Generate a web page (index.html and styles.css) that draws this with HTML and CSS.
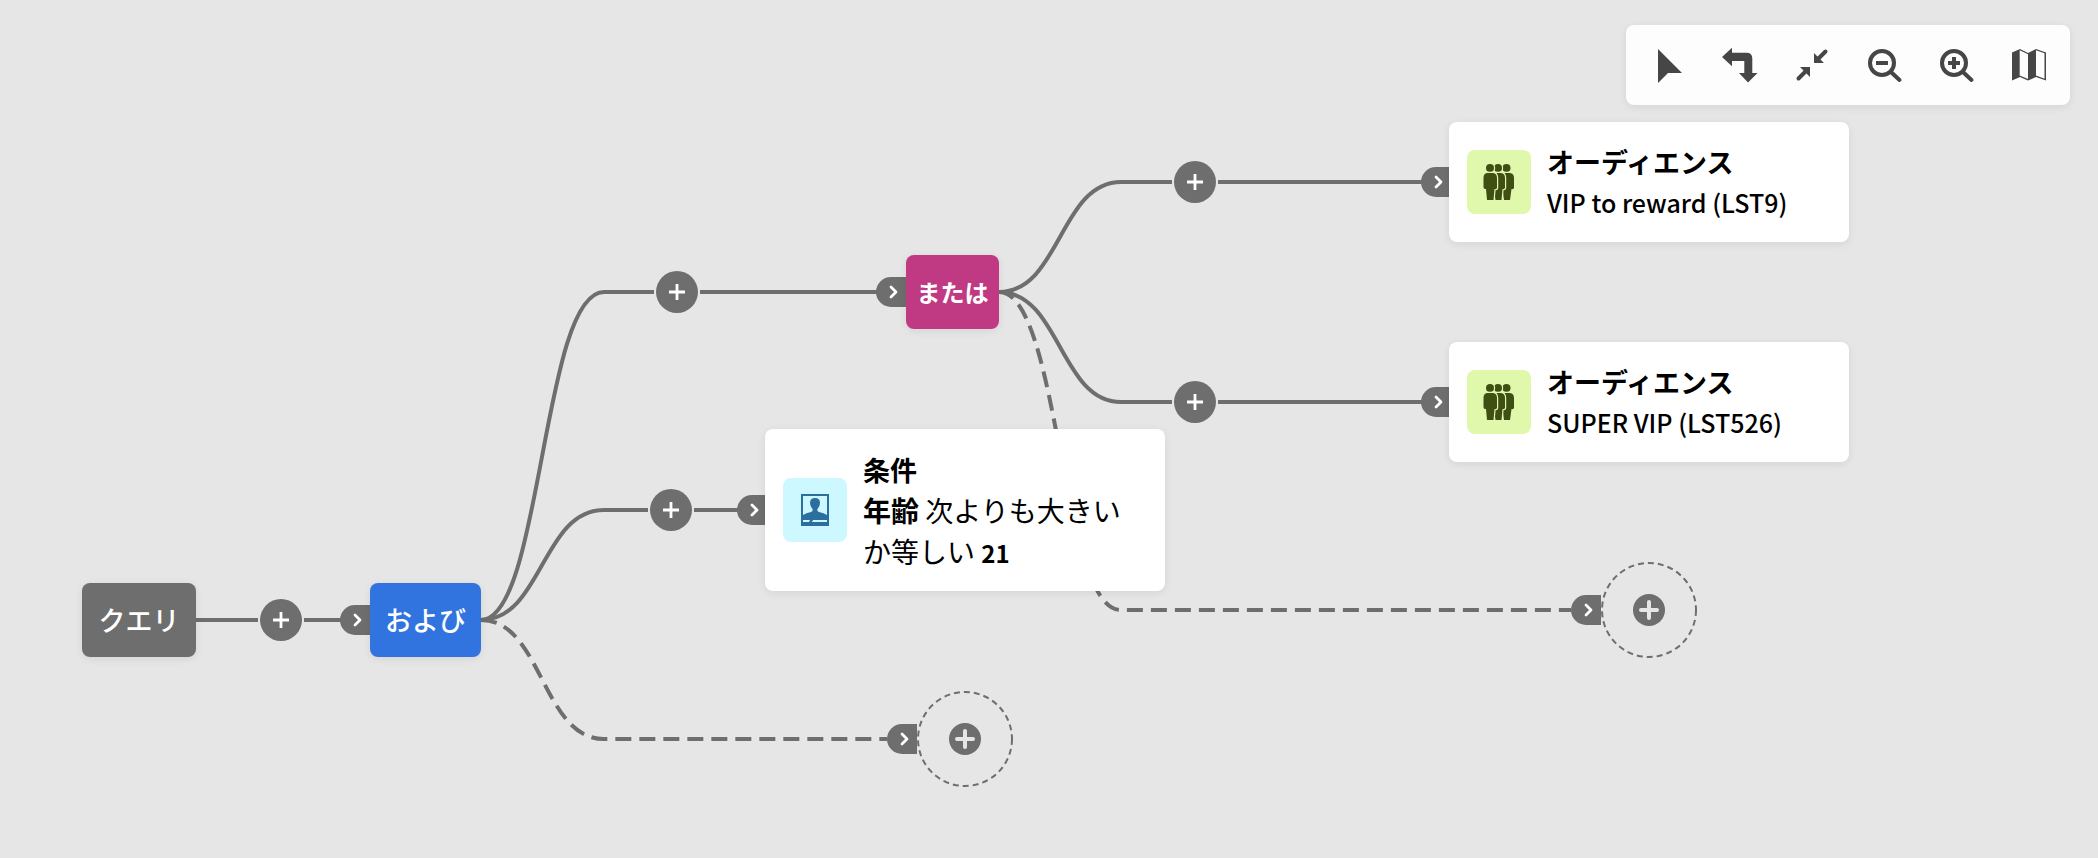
FILE: index.html
```html
<!DOCTYPE html>
<html lang="ja">
<head>
<meta charset="utf-8">
<title>クエリ</title>
<link rel="stylesheet" href="styles.css">
</head>
<body>
<svg class="symbols" aria-hidden="true">
  <symbol id="chevron" viewBox="0 0 12 16"><path d="M3 3 L8 8 L3 13" fill="none" stroke="#fff" stroke-width="2.8" stroke-linecap="round" stroke-linejoin="round"/></symbol>
  <symbol id="plus" viewBox="0 0 16 16"><path d="M8 0V16M0 8H16" stroke="#fff" stroke-width="2.8"/></symbol>
  <symbol id="plus-round" viewBox="0 0 32 32"><circle cx="16" cy="16" r="16" fill="#6e6e6e"/><path d="M16 8V24M8 16H24" stroke="#e6e6e6" stroke-width="4" stroke-linecap="round"/></symbol>
  <symbol id="people" viewBox="0 0 32 38">
    <g fill="#3f4f14" stroke="#e0f8ac" stroke-width="2.4" paint-order="stroke">
      <circle cx="23.5" cy="5" r="4"/>
      <path d="M20 10H27Q31 10.500 31 15V25Q30.500 26.500 28.500 26L27 37H21L19.500 26Q16.500 26 17 24V15Q17 10.500 20 10Z"/>
    </g>
    <g fill="#3f4f14" stroke="#e0f8ac" stroke-width="2.4" paint-order="stroke">
      <circle cx="15" cy="5" r="4"/>
      <path d="M11 10H18Q22 10.500 22 15V25Q21.500 26.500 19.500 26L18.500 37H12.500L11 26Q8 26 8.500 24V15Q8 10.500 11 10Z"/>
    </g>
    <g fill="#3f4f14" stroke="#e0f8ac" stroke-width="2.4" paint-order="stroke">
      <circle cx="7" cy="5" r="4"/>
      <path d="M4 10H10Q14 10.500 14 15V25Q13.500 26.500 11.500 26L10.500 37H4L3 26Q.5 26.500 .5 24V15Q.5 10.500 4 10Z"/>
    </g>
  </symbol>
</svg>

<main class="canvas">
  <svg class="links" width="100%" height="100%" aria-hidden="true">
    <path d="M196 620H258M304 620H342"/>
    <path d="M481 620C542 620 542 292 604 292H654M700 292H878"/>
    <path d="M481 620C542 620 542 510 604 510H648M694 510H739"/>
    <path d="M999 292C1060 292 1060 182 1121 182H1172M1218 182H1423"/>
    <path d="M999 292C1060 292 1060 402 1121 402H1172M1218 402H1423"/>
    <path class="dashed" d="M481 620C542 620 542 739 604 739H887"/>
    <path class="dashed" d="M999 292C1060 292 1060 610 1121 610H1571"/>
  </svg>

  <div class="node op query">クエリ</div>
  <button class="add add-query" aria-label="追加"><svg><use href="#plus"/></svg></button>
  <span class="port port-and"><svg><use href="#chevron"/></svg></span>
  <div class="node op and">および</div>

  <button class="add add-or" aria-label="追加"><svg><use href="#plus"/></svg></button>
  <span class="port port-or"><svg><use href="#chevron"/></svg></span>
  <div class="node op or">または</div>

  <button class="add add-cond" aria-label="追加"><svg><use href="#plus"/></svg></button>
  <span class="port port-cond"><svg><use href="#chevron"/></svg></span>
  <article class="node card cond">
    <span class="tile tile-cond"><svg class="profile" viewBox="0 0 28 32"><path fill="#2c6e9e" fill-rule="evenodd" d="M0 0H28V32H0ZM2 2V21Q5 19 10 18Q12.300 17 11.500 15Q9 12.500 9 9Q9 4 14 4Q19 4 19 9Q19 12.500 16.500 15Q15.700 17 18 18Q23 19 26 21V2ZM2 26V28H8L9 26ZM12 26L11 28H26V26Z"/></svg></span>
    <div class="text"><h2 class="title">条件</h2><p class="line rule"><b>年齢</b> 次よりも大きい<br>か等しい <b class="value">21</b></p></div>
  </article>

  <button class="add add-vip" aria-label="追加"><svg><use href="#plus"/></svg></button>
  <span class="port port-vip"><svg><use href="#chevron"/></svg></span>
  <article class="node card vip">
    <span class="tile tile-aud"><svg class="people"><use href="#people"/></svg></span>
    <div class="text"><h2 class="title">オーディエンス</h2><p class="line name">VIP to reward (LST9)</p></div>
  </article>

  <button class="add add-super" aria-label="追加"><svg><use href="#plus"/></svg></button>
  <span class="port port-super"><svg><use href="#chevron"/></svg></span>
  <article class="node card super">
    <span class="tile tile-aud"><svg class="people"><use href="#people"/></svg></span>
    <div class="text"><h2 class="title">オーディエンス</h2><p class="line name">SUPER VIP (LST526)</p></div>
  </article>

  <span class="port port-slot-a"><svg><use href="#chevron"/></svg></span>
  <button class="slot slot-a" aria-label="追加"><svg class="ring" viewBox="0 0 96 96"><circle cx="48" cy="48" r="47"/></svg><svg class="dot"><use href="#plus-round"/></svg></button>
  <span class="port port-slot-b"><svg><use href="#chevron"/></svg></span>
  <button class="slot slot-b" aria-label="追加"><svg class="ring" viewBox="0 0 96 96"><circle cx="48" cy="48" r="47"/></svg><svg class="dot"><use href="#plus-round"/></svg></button>

  <nav class="toolbar" aria-label="ツールバー">
    <button class="tool" aria-label="選択"><svg viewBox="0 0 36 36"><path d="M8 2V36L18 26H32Z"/></svg></button>
    <button class="tool" aria-label="向き"><svg viewBox="0 0 36 36"><path d="M0 10L10 .7V5.700H24.500Q30.300 5.700 30.300 11.500V26H35.500L26 35.500L17 26H22.300V14H10V19.300Z"/></svg></button>
    <button class="tool" aria-label="合わせる"><svg viewBox="0 0 36 36"><path d="M20 6V16H30L20 6ZM6 20H16V30L6 20Z"/><path class="grip" d="M31.500 4.500L23 13M4.500 31.500L13 23"/></svg></button>
    <button class="tool" aria-label="縮小"><svg viewBox="0 0 36 36"><circle cx="16" cy="16" r="12" class="lens"/><path d="M10 14H22V18H10Z"/><path class="grip" d="M25.500 25.500L33.500 33"/></svg></button>
    <button class="tool" aria-label="拡大"><svg viewBox="0 0 36 36"><circle cx="16" cy="16" r="12" class="lens"/><path d="M10 14H14V10H18V14H22V18H18V22H14V18H10Z"/><path class="grip" d="M25.500 25.500L33.500 33"/></svg></button>
    <button class="tool" aria-label="マップ"><svg viewBox="0 0 36 36"><path fill-rule="evenodd" d="M2 5.500L10 2L18 6L26 2L36 5.500V33.500L26 30L18 33.500L10 30L2 33.500ZM9.700 3.300V28.500L18 32V7.300ZM26 3.300V28.500L34.500 31.800V6.300Z"/></svg></button>
  </nav>
</main>
</body>
</html>
```

FILE: styles.css
```css
* { box-sizing: border-box; }
body {
  margin: 0;
  background: #e6e6e6;
  color: #000;
  font-family: "Noto Sans CJK JP", "Noto Sans", sans-serif;
}
button { padding: 0; border: 0; background: none; font: inherit; cursor: pointer; }
svg { display: block; overflow: visible; }
.symbols { position: absolute; width: 0; height: 0; }

.canvas { position: relative; min-height: 100vh; overflow: hidden; }
.links { position: absolute; inset: 0; }
.links path { fill: none; stroke: #6e6e6e; stroke-width: 4; }
.links .dashed { stroke-dasharray: 16 8; }

.node { position: absolute; border-radius: 8px; box-shadow: 0 2px 8px rgba(0, 0, 0, .08); }
.op {
  display: flex; align-items: center; justify-content: center;
  height: 74px; color: #fff; font-size: 27px; font-weight: 500; line-height: 40px;
}
.query { left: 82px; top: 583px; width: 114px; background: #6e6e6e; }
.and { left: 370px; top: 583px; width: 111px; background: #3174e0; }
.or { left: 906px; top: 255px; width: 93px; background: #bf3a82; font-size: 24px; font-weight: 700; }

.card { display: flex; align-items: center; gap: 16px; width: 400px; padding: 18px; background: #fff; }
.cond { left: 765px; top: 429px; min-height: 162px; }
.vip { left: 1449px; top: 122px; min-height: 120px; }
.super { left: 1449px; top: 342px; min-height: 120px; }
.tile { display: flex; flex: none; align-items: center; justify-content: center; width: 64px; height: 64px; border-radius: 8px; }
.tile-aud { background: #e0f8ac; }
.tile-cond { background: #cef8ff; }
.people { width: 32px; height: 38px; }
.profile { width: 28px; height: 32px; }
.text { flex: 1; min-width: 0; }
.title, .line { margin: 0; font-size: 27px; line-height: 41px; }
.title { font-weight: 700; }
.line { font-weight: 400; }
.rule { font-size: 28px; }
.name { font-size: 25px; font-weight: 500; }
.value { font-size: 24px; line-height: 1; }

.port {
  position: absolute; display: flex; align-items: center; justify-content: flex-end;
  width: 30px; height: 30px; padding-right: 6px;
  border-radius: 15px 0 0 15px; background: #6e6e6e;
}
.port svg { width: 12px; height: 16px; }
.port-and { left: 340px; top: 605px; }
.port-or { left: 876px; top: 277px; }
.port-cond { left: 737px; top: 495px; }
.port-vip { left: 1421px; top: 167px; }
.port-super { left: 1421px; top: 387px; }
.port-slot-a { left: 1571px; top: 595px; }
.port-slot-b { left: 887px; top: 724px; }

.add {
  position: absolute; display: flex; align-items: center; justify-content: center;
  width: 42px; height: 42px; border-radius: 50%; background: #6e6e6e;
}
.add svg { width: 16px; height: 16px; }
.add-query { left: 260px; top: 599px; }
.add-or { left: 656px; top: 271px; }
.add-cond { left: 650px; top: 489px; }
.add-vip { left: 1174px; top: 161px; }
.add-super { left: 1174px; top: 381px; }

.slot { position: absolute; display: grid; place-items: center; width: 96px; height: 96px; border-radius: 50%; }
.slot > svg { grid-area: 1 / 1; }
.ring { width: 96px; height: 96px; }
.ring circle { fill: none; stroke: #6e6e6e; stroke-width: 2; stroke-dasharray: 6 4; }
.dot { width: 32px; height: 32px; }
.slot-a { left: 1601px; top: 562px; }
.slot-b { left: 917px; top: 691px; }

.toolbar {
  position: absolute; top: 25px; right: 28px;
  display: flex; align-items: center; gap: 8px; padding: 8px 10px;
  border-radius: 8px; background: #fdfdfd; box-shadow: 0 2px 8px rgba(0, 0, 0, .08);
}
.tool { display: grid; place-items: center; width: 64px; height: 64px; }
.tool svg { width: 36px; height: 36px; fill: #464646; }
.tool .lens { fill: none; stroke: #464646; stroke-width: 4; }
.tool .grip { stroke: #464646; stroke-width: 4; stroke-linecap: round; }
```
